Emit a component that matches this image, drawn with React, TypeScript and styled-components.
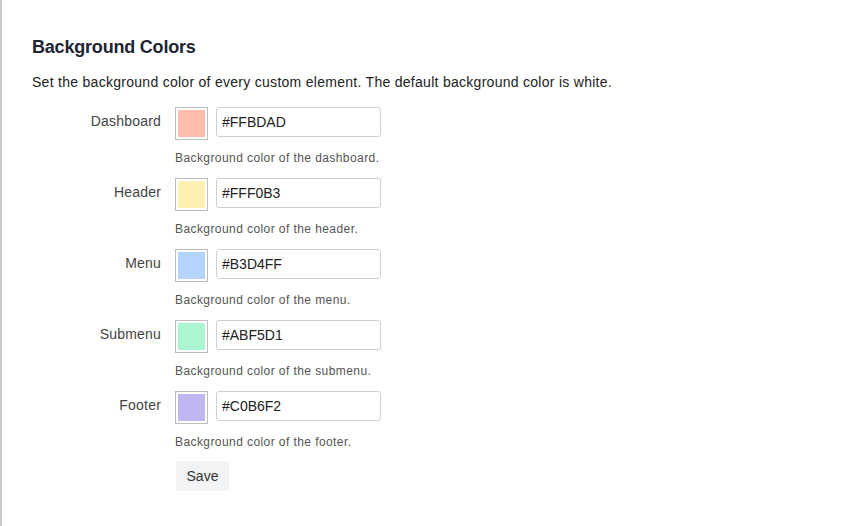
import styled, { createGlobalStyle } from "styled-components";

const GlobalStyle = createGlobalStyle`
  html, body {
    margin: 0;
    padding: 0;
    background: #fff;
  }
  body {
    font-family: "Liberation Sans", Arial, sans-serif;
    color: #222;
  }
`;

const Page = styled.div`
  min-height: 526px;
  box-sizing: border-box;
  border-left: 2px solid #c9c9c9;
  padding: 35px 0 0 30px;
`;

const Title = styled.h2`
  margin: 0;
  font-size: 18px;
  line-height: 24px;
  font-weight: 600;
  letter-spacing: -0.2px;
  color: #1d2433;
`;

const Intro = styled.p`
  margin: 13px 0 15px;
  font-size: 14px;
  line-height: 20px;
  letter-spacing: 0.28px;
  color: #222;
`;

const Row = styled.div`
  display: grid;
  grid-template-columns: 129px auto;
  column-gap: 14px;
  margin-bottom: 12px;
`;

const Label = styled.label`
  padding-top: 4px;
  text-align: right;
  font-size: 14px;
  line-height: 20px;
  letter-spacing: 0.2px;
  color: #444;
`;

const Field = styled.div`
  display: flex;
  gap: 8px;
  align-items: flex-start;
`;

const Swatch = styled.div<{ $color: string }>`
  width: 33px;
  height: 33px;
  box-sizing: border-box;
  border: 1px solid #bdbdbd;
  padding: 2px;
  background: #fff;

  &::after {
    content: "";
    display: block;
    width: 100%;
    height: 100%;
    background: ${(p) => p.$color};
  }
`;

const HexInput = styled.input`
  width: 165px;
  height: 30px;
  box-sizing: border-box;
  border: 1px solid #cfcfcf;
  border-radius: 3px;
  padding: 0 5px;
  font-family: inherit;
  font-size: 14px;
  color: #222;
  outline: none;
`;

const Help = styled.div`
  grid-column: 2;
  margin-top: 10px;
  font-size: 12px;
  line-height: 16px;
  letter-spacing: 0.42px;
  color: #555;
`;

const Actions = styled.div`
  padding: 0 0 0 144px;
  margin-top: -1px;
`;

const SaveButton = styled.button`
  width: 53px;
  height: 30px;
  border: 0;
  border-radius: 3px;
  background: #f2f3f5;
  font-family: inherit;
  font-size: 14px;
  color: #333;
  padding: 0;
`;

const colors = [
  { name: "Dashboard", key: "dashboard", value: "#FFBDAD" },
  { name: "Header", key: "header", value: "#FFF0B3" },
  { name: "Menu", key: "menu", value: "#B3D4FF" },
  { name: "Submenu", key: "submenu", value: "#ABF5D1" },
  { name: "Footer", key: "footer", value: "#C0B6F2" },
];

export default function App() {
  return (
    <>
      <GlobalStyle />
      <Page>
        <Title>Background Colors</Title>
        <Intro>
          Set the background color of every custom element. The default
          background color is white.
        </Intro>
        {colors.map((c) => (
          <Row key={c.key}>
            <Label htmlFor={c.key}>{c.name}</Label>
            <Field>
              <Swatch $color={c.value} />
              <HexInput id={c.key} defaultValue={c.value} />
            </Field>
            <Help>Background color of the {c.key}.</Help>
          </Row>
        ))}
        <Actions>
          <SaveButton type="button">Save</SaveButton>
        </Actions>
      </Page>
    </>
  );
}
